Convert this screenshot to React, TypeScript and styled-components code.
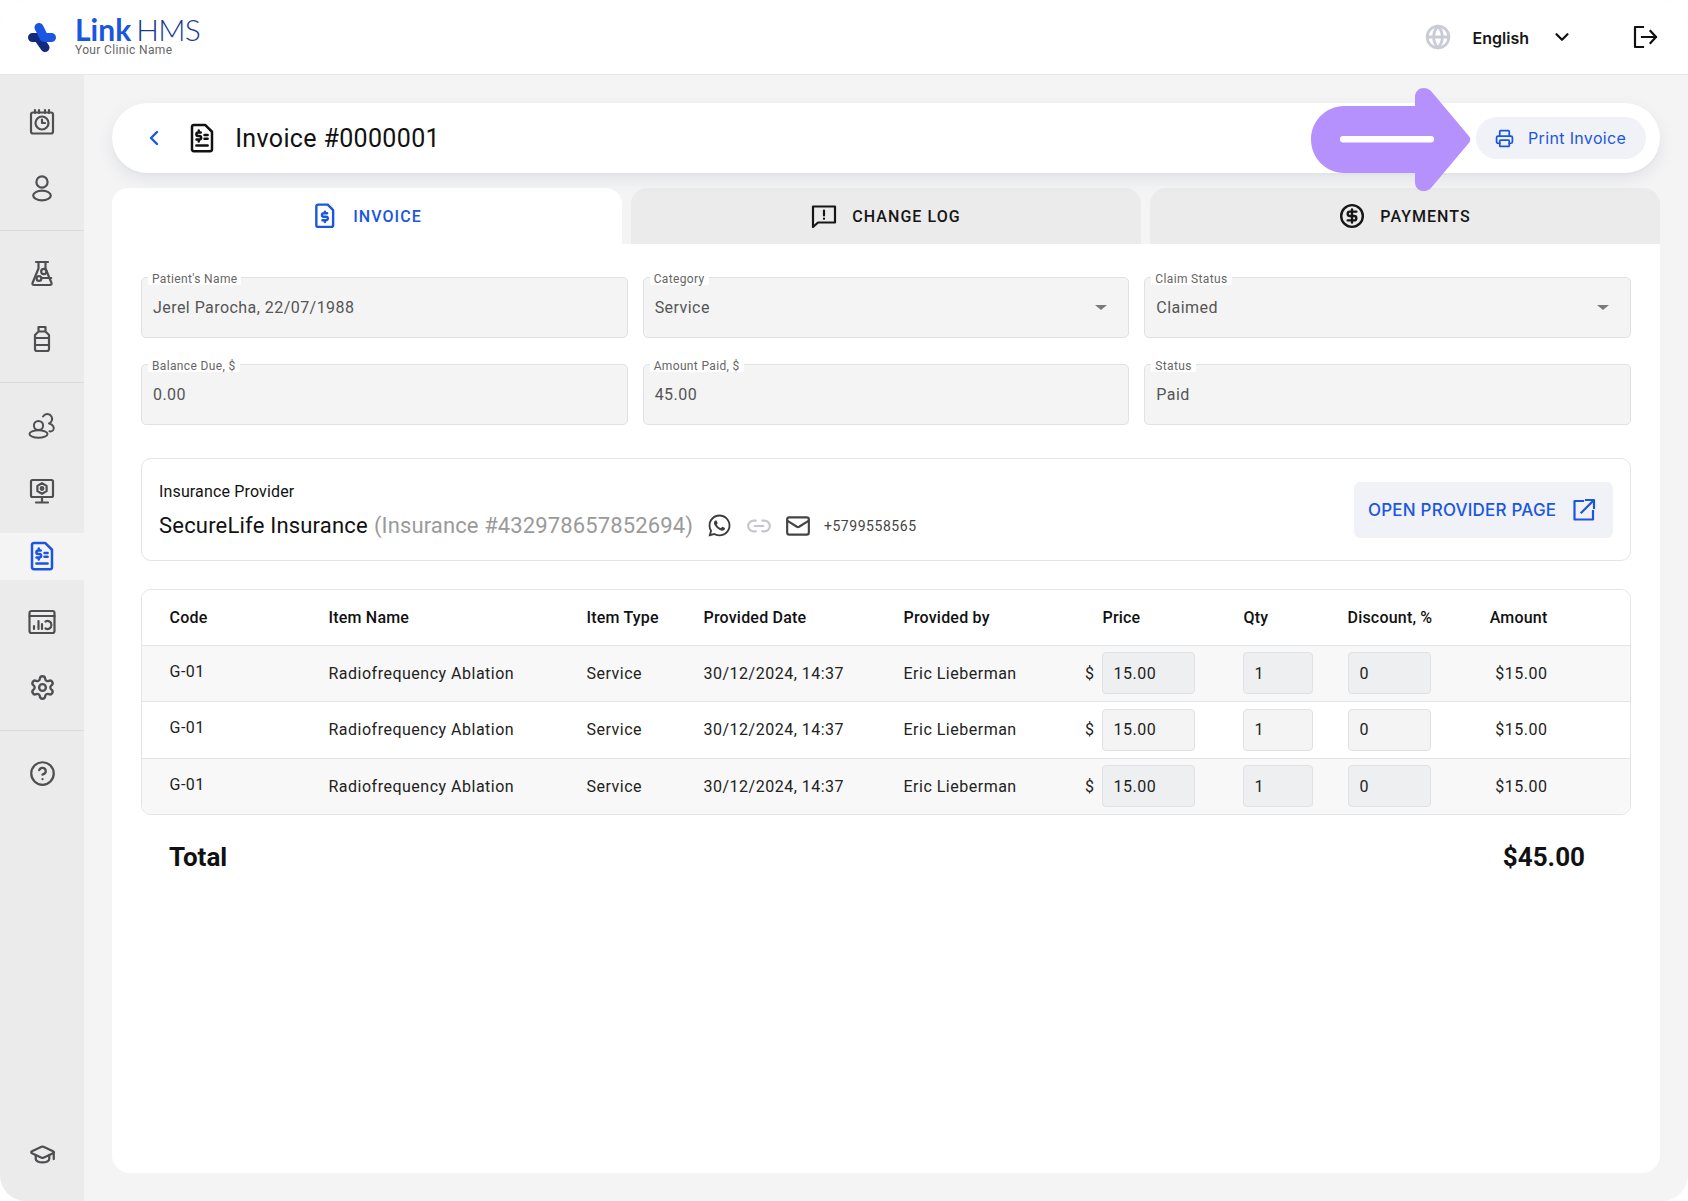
import React from "react";
import styled, { createGlobalStyle } from "styled-components";
import { ChevronDown, ChevronLeft, CircleDollarSign, CircleHelp, Globe, GraduationCap, Link2, Mail, Printer, Settings } from "lucide-react";
import { FaWhatsapp } from "react-icons/fa";

const BLUE = "#1a56e0";
const INK = "#4f4f52";

const GlobalStyle = createGlobalStyle`
  html, body { margin: 0; padding: 0; background: #fff; }
  * { box-sizing: border-box; }
  body { font-family: Roboto, "Liberation Sans", sans-serif; color: #111; }
`;

const Shell = styled.div`
  width: 1688px;
  height: 1201px;
  display: flex;
  flex-direction: column;
  border-radius: 26px;
  overflow: hidden;
  background: #f4f4f5;
`;

const TopBar = styled.header`
  height: 75px;
  flex: none;
  display: flex;
  align-items: center;
  padding: 0 28px;
  background: #fff;
  border-bottom: 1px solid #e6e7e9;
`;

const Brand = styled.div`
  display: flex;
  align-items: center;
  gap: 19px;
`;

const BrandText = styled.div`
  display: flex;
  flex-direction: column;
  margin-top: -3px;
`;

const BrandName = styled.div`
  font-family: Lato, sans-serif;
  font-size: 30px;
  line-height: 28px;
  font-weight: 700;
  color: ${BLUE};
  span { font-weight: 300; color: #17398f; margin-left: 5px; letter-spacing: -0.6px; }
`;

const ClinicName = styled.div`
  font-size: 12px;
  line-height: 12px;
  color: #666;
  letter-spacing: 0.35px;
  margin-top: 1px;
`;

const TopActions = styled.div`
  margin-left: auto;
  display: flex;
  align-items: center;
  padding-right: 2px;
`;

const Language = styled.span`
  font-family: Inter, sans-serif;
  font-weight: 600;
  font-size: 16px;
  color: #161616;
  margin: 1px 22px 0 22px;
`;

const LogoutSlot = styled.span`
  display: flex;
  margin-left: 59px;
`;

const Body = styled.div`
  flex: 1;
  display: flex;
  min-height: 0;
`;

const SideNav = styled.nav`
  width: 84px;
  flex: none;
  display: flex;
  flex-direction: column;
  background: #ebebeb;
`;

const NavGroup = styled.div<{ $first?: boolean; $plain?: boolean }>`
  display: flex;
  flex-direction: column;
  gap: 18.5px;
  padding: ${(p) => (p.$first ? "23.5px" : "19px")} 0 19px;
  border-bottom: ${(p) => (p.$plain ? "none" : "1px solid #d9dbe0")};
`;

const NavFooter = styled.div`
  margin-top: auto;
  padding-bottom: 23px;
`;

const NavItem = styled.div<{ $active?: boolean }>`
  height: 47px;
  display: flex;
  align-items: center;
  justify-content: center;
  color: ${(p) => (p.$active ? BLUE : INK)};
  background: ${(p) => (p.$active ? "#f4f4f5" : "transparent")};
`;

const Main = styled.main`
  flex: 1;
  min-width: 0;
  display: flex;
  flex-direction: column;
  gap: 15px;
  padding: 28px 28px 28px;
`;

const TitleBar = styled.div`
  position: relative;
  z-index: 2;
  height: 70px;
  flex: none;
  display: flex;
  align-items: center;
  padding: 0 14px 0 30px;
  border-radius: 35px;
  background: #fff;
  box-shadow: 0 2px 0 #e2e4e8, 0 6px 16px rgba(70, 80, 100, 0.1);
`;

const BackSlot = styled.span`
  display: flex;
  color: ${BLUE};
  margin-right: 20.5px;
`;

const Title = styled.h1`
  margin: 0 0 0 18.7px;
  font-size: 25px;
  font-weight: 400;
  letter-spacing: 0.35px;
  color: #111;
`;

const PrintButton = styled.button`
  margin-left: auto;
  height: 42px;
  width: 170px;
  display: flex;
  align-items: center;
  gap: 14px;
  padding: 0 0 0 19px;
  border: none;
  border-radius: 21px;
  background: #f0f2f7;
  color: ${BLUE};
  font-family: Inter, sans-serif;
  font-size: 16px;
  font-weight: 400;
  letter-spacing: 0.35px;
`;

const Annotation = styled.svg`
  position: absolute;
  left: 1199px;
  top: -16px;
  overflow: visible;
`;

const Card = styled.section`
  flex: 1;
  min-height: 0;
  display: flex;
  flex-direction: column;
`;

const Tabs = styled.div`
  display: grid;
  grid-template-columns: repeat(3, 1fr);
  gap: 9px;
  height: 56px;
  flex: none;
`;

const Tab = styled.div<{ $active?: boolean }>`
  display: flex;
  align-items: center;
  justify-content: center;
  gap: 15px;
  border-radius: 16px 16px 0 0;
  background: ${(p) => (p.$active ? "#fff" : "#ebebeb")};
  color: ${(p) => (p.$active ? BLUE : "#161616")};
  font-size: 16px;
  font-weight: 500;
  letter-spacing: 1.05px;
`;

const Panel = styled.div`
  flex: 1;
  padding: 33px 29px 0;
  background: #fff;
  border-radius: 0 0 18px 18px;
`;

const FieldGrid = styled.div`
  display: grid;
  grid-template-columns: repeat(3, 1fr);
  gap: 25.5px 15px;
`;

const Field = styled.div`
  position: relative;
  height: 61px;
  display: flex;
  align-items: center;
  padding-left: 11px;
  background: #f4f4f4;
  border: 1.5px solid #e0e1e3;
  border-radius: 5px;
  font-size: 16px;
  letter-spacing: 0.45px;
  color: #555;
`;

const FieldLabel = styled.span`
  position: absolute;
  left: 6px;
  top: -5px;
  height: 12px;
  padding: 0 4px;
  background: #fff;
  font-size: 12px;
  line-height: 12px;
  letter-spacing: 0.35px;
  color: #666;
`;

const Caret = styled.span`
  position: absolute;
  right: 21px;
  top: 27px;
  border-left: 6px solid transparent;
  border-right: 6px solid transparent;
  border-top: 5.5px solid #7a7a7a;
`;

const ProviderBox = styled.div`
  margin-top: 33.5px;
  height: 103px;
  display: flex;
  align-items: center;
  justify-content: space-between;
  padding: 0 17px 0 17px;
  border: 1.5px solid #e3e4e8;
  border-radius: 10px;
`;

const ProviderLabel = styled.div`
  font-size: 16px;
  line-height: 20px;
  letter-spacing: 0.15px;
  color: #111;
`;

const ProviderLine = styled.div`
  display: flex;
  align-items: center;
  margin-top: 12px;
  height: 24px;
`;

const ProviderName = styled.span`
  font-size: 22px;
  letter-spacing: 0.2px;
  color: #111;
`;

const ProviderNumber = styled.span`
  font-size: 22px;
  letter-spacing: 0.12px;
  margin-left: 6px;
  color: #9a9a9a;
`;

const ContactIcon = styled.span<{ $color: string; $gap: number }>`
  display: flex;
  color: ${(p) => p.$color};
  margin-left: ${(p) => p.$gap}px;
`;

const Phone = styled.span`
  margin-left: 13px;
  font-size: 14px;
  letter-spacing: 0.55px;
  color: #444;
`;

const ProviderButton = styled.button`
  width: 259px;
  height: 56px;
  display: flex;
  align-items: center;
  gap: 16px;
  padding: 0 0 0 14px;
  border: none;
  border-radius: 6px;
  background: #f0f2f7;
  color: ${BLUE};
  font-family: Inter, sans-serif;
  font-size: 17px;
  font-weight: 500;
  letter-spacing: 0.2px;
  white-space: nowrap;
`;

const Table = styled.div`
  margin-top: 28px;
  border: 1.5px solid #e3e4e8;
  border-radius: 10px;
  overflow: hidden;
`;

const Row = styled.div<{ $shade?: boolean; $head?: boolean }>`
  display: grid;
  grid-template-columns: 159px 258px 117px 200px 168px 171px 105px 83px 117px;
  align-items: center;
  height: ${(p) => (p.$head ? "54.5px" : "56.5px")};
  padding-left: 27.5px;
  background: ${(p) => (p.$shade ? "#f8f8f8" : "#fff")};
  border-top: ${(p) => (p.$head ? "none" : "1.5px solid #e3e4e8")};
  font-size: 16px;
  letter-spacing: 0.5px;
  color: #222;
`;

const HeadCell = styled.div<{ $indent?: number; $right?: boolean }>`
  font-weight: 500;
  color: #111;
  letter-spacing: 0.2px;
  white-space: nowrap;
  padding-left: ${(p) => p.$indent ?? 0}px;
  text-align: ${(p) => (p.$right ? "right" : "left")};
`;

const CodeCell = styled.div`
  margin-top: -4px;
`;

const PriceCell = styled.div`
  display: flex;
  align-items: center;
`;

const Currency = styled.span`
  width: 30px;
  padding-right: 7px;
  text-align: right;
`;

const ValueBox = styled.div<{ $width: number; $shade?: boolean }>`
  width: ${(p) => p.$width}px;
  height: 42px;
  display: flex;
  align-items: center;
  padding-left: 11px;
  background: ${(p) => (p.$shade ? "#eeeff0" : "#f4f4f5")};
  border: 1.5px solid #e0e1e3;
  border-radius: 4px;
`;

const AmountCell = styled.div`
  text-align: right;
`;

const TotalRow = styled.div`
  display: flex;
  justify-content: space-between;
  margin: 27px 46px 0 28px;
  font-size: 26px;
  line-height: 30px;
  font-weight: 700;
  color: #111;
`;

/* drawn icons, everything else comes from lucide */
const stroke = { fill: "none", stroke: "currentColor", strokeLinecap: "round", strokeLinejoin: "round" } as const;

const LogoMark = () => (
  <svg width="28" height="29" viewBox="0 0 28 29">
    <defs>
      <pattern id="logoDots" width="1.8" height="1.8" patternUnits="userSpaceOnUse">
        <rect width="1.8" height="1.8" fill="#1a3fae" />
        <circle cx="0.9" cy="0.9" r="0.75" fill="#050f3a" />
      </pattern>
    </defs>
    <path d="M4.5 14.5H10L17 24.5" fill="none" stroke="url(#logoDots)" strokeWidth="9" strokeLinejoin="round" strokeLinecap="round" />
    <path d="M11 4.500L16 14.500H23.500" fill="none" stroke="#1a56e0" strokeWidth="9" strokeLinejoin="round" strokeLinecap="round" />
  </svg>
);

const BillIcon = ({ size = 26 }: { size?: number }) => (
  <svg width={size} height={size} viewBox="0 0 24 24" {...stroke} strokeWidth="2">
    <path d="M5.5 1.5h9l5.5 5.5v14a1.5 1.5 0 0 1-1.5 1.5h-13A1.5 1.5 0 0 1 4 21V3a1.5 1.5 0 0 1 1.5-1.5z" />
    <path d="M11 7.6H8.9a1.4 1.4 0 0 0 0 2.8h1a1.4 1.4 0 0 1 0 2.8H7.6M9.4 6v1.6M9.4 13.2v1.6" />
    <path d="M14 9.5h2.5M14 12.5h2.5M7.5 18h9" />
  </svg>
);

const TabDocIcon = () => (
  <svg width="26" height="26" viewBox="0 0 24 24" {...stroke} strokeWidth="2.2">
    <path d="M5.5 1.5h9l5 5v14a1.5 1.5 0 0 1-1.5 1.5H5.5A1.5 1.5 0 0 1 4 20.5V3a1.5 1.500 0 0 1 1.5-1.5z" />
    <path d="M14 9.5h-3.2a1.6 1.6 0 0 0 0 3.2h2.2a1.6 1.6 0 0 1 0 3.2H9.6M11.9 8v1.5M11.9 16v1.5" />
  </svg>
);

const PlannerIcon = () => (
  <svg width="28" height="28" viewBox="0 0 28 28" {...stroke} strokeWidth="2.2">
    <rect x="3" y="4.5" width="22" height="21" rx="2" />
    <path d="M7 2v3M11 2v3M17 2v3M21 2v3" />
    <circle cx="14" cy="15" r="6.5" />
    <path d="M14 11.5V15h3" />
  </svg>
);

const PersonIcon = () => (
  <svg width="26" height="28" viewBox="0 0 26 28" {...stroke} strokeWidth="2.2">
    <circle cx="13" cy="8" r="5.6" />
    <ellipse cx="13" cy="21.5" rx="8.8" ry="4.8" />
  </svg>
);

const FlaskIcon = () => (
  <svg width="26" height="28" viewBox="0 0 26 28" {...stroke} strokeWidth="2.2">
    <path d="M7 2h12M9.5 2v6.5L3.5 23a1.5 1.5 0 0 0 1.4 2h16.200a1.500 1.500 0 0 0 1.400-2L16.500 8.500V2" />
    <circle cx="14.800" cy="11.500" r="2.600" />
    <circle cx="10" cy="18.500" r="2.400" />
    <path d="M12.200 18h10" />
  </svg>
);

const BottleIcon = () => (
  <svg width="22" height="28" viewBox="0 0 22 28" {...stroke} strokeWidth="2.2">
    <path d="M7.500 2h7v4.500h-7zM7.500 6.500L4 10v14a2 2 0 0 0 2 2h10a2 2 0 0 0 2-2V10l-3.500-3.500" />
    <path d="M4 13h14M4 20h14" />
  </svg>
);

const PeopleIcon = () => (
  <svg width="28" height="27" viewBox="0 0 28 27" {...stroke} strokeWidth="2">
    <circle cx="10.500" cy="13.500" r="4.600" />
    <ellipse cx="10.500" cy="22" rx="9" ry="3.800" />
    <path d="M15 4.500C17 1.500 21.500 1 23.500 4.500C25 7.500 23.500 10.500 21 11.500C25 12 26.800 16 25.300 18C24.300 19.300 22.800 19.600 21.500 19.300" />
  </svg>
);

const MonitorIcon = () => (
  <svg width="28" height="28" viewBox="0 0 28 28" {...stroke} strokeWidth="2.200">
    <rect x="3" y="3" width="22" height="17" rx="1.500" />
    <path d="M14 20v5M8 25.500h12" />
    <path d="M14 6.200l4.600 2.650v5.300L14 16.800l-4.600-2.650v-5.300z" />
    <circle cx="14" cy="11.500" r="1.300" />
  </svg>
);

const ReportIcon = () => (
  <svg width="28" height="26" viewBox="0 0 28 26" {...stroke} strokeWidth="2.200">
    <rect x="1.500" y="2" width="25" height="22" rx="2" />
    <path d="M1.500 7h25" />
    <path d="M6 20v-3M10.500 20v-8M14 20v-5" />
    <path d="M17.500 12.500a4 4 0 1 1 0 7" />
  </svg>
);

const LogoutIcon = () => (
  <svg width="26" height="26" viewBox="0 0 26 26" {...stroke} strokeWidth="2.200" strokeLinecap="square">
    <path d="M11 3H3v20h8" />
    <path d="M10 13h14M18.500 7l5.500 6-5.500 6" />
  </svg>
);

const CommentIcon = () => (
  <svg width="26" height="26" viewBox="0 0 26 26" {...stroke} strokeWidth="2.200">
    <path d="M2 3.500h22v16H7l-5 4.500z" strokeLinejoin="round" />
    <path d="M13 7.500v5M13 15.500v.3" />
  </svg>
);

const OutlinkIcon = () => (
  <svg width="24" height="24" viewBox="0 0 24 24" {...stroke} strokeWidth="2.200" strokeLinecap="square">
    <path d="M11 3H2.500v18.500H21V13" />
    <path d="M9.500 14.500L21.500 2.500M14 2h8v8" />
  </svg>
);

const rows = [true, false, true];

export default function App() {
  return (
    <>
      <GlobalStyle />
      <Shell>
        <TopBar>
          <Brand>
            <LogoMark />
            <BrandText>
              <BrandName>
                Link<span>HMS</span>
              </BrandName>
              <ClinicName>Your Clinic Name</ClinicName>
            </BrandText>
          </Brand>
          <TopActions>
            <Globe size={26} color="#c9cbd6" strokeWidth={2.6} />
            <Language>English</Language>
            <ChevronDown size={22} color="#111" strokeWidth={2.4} />
            <LogoutSlot>
              <LogoutIcon />
            </LogoutSlot>
          </TopActions>
        </TopBar>
        <Body>
          <SideNav>
            <NavGroup $first>
              <NavItem><PlannerIcon /></NavItem>
              <NavItem><PersonIcon /></NavItem>
            </NavGroup>
            <NavGroup>
              <NavItem><FlaskIcon /></NavItem>
              <NavItem><BottleIcon /></NavItem>
            </NavGroup>
            <NavGroup>
              <NavItem><PeopleIcon /></NavItem>
              <NavItem><MonitorIcon /></NavItem>
              <NavItem $active><BillIcon size={30} /></NavItem>
              <NavItem><ReportIcon /></NavItem>
              <NavItem><Settings size={27} strokeWidth={2.1} /></NavItem>
            </NavGroup>
            <NavGroup $plain>
              <NavItem><CircleHelp size={27} strokeWidth={2} /></NavItem>
            </NavGroup>
            <NavFooter>
              <NavItem><GraduationCap size={27} strokeWidth={2} /></NavItem>
            </NavFooter>
          </SideNav>
          <Main>
            <TitleBar>
              <BackSlot><ChevronLeft size={24} strokeWidth={2.4} /></BackSlot>
              <BillIcon size={30} />
              <Title>Invoice #0000001</Title>
              <PrintButton>
                <Printer size={19} strokeWidth={2.2} />
                Print Invoice
              </PrintButton>
              <Annotation width="160" height="105" viewBox="0 0 160 105">
                <path
                  d="M33 19H104V10C104 1 114 -2 120 4L157 48C160 51 160 54 157 57L120 101C114 107 104 104 104 95V86H33C15 86 0 71 0 52.500C0 34 15 19 33 19Z"
                  fill="#b491fd"
                />
                <rect x="29" y="49" width="94" height="6.500" rx="3" fill="#fff" />
              </Annotation>
            </TitleBar>
            <Card>
              <Tabs>
                <Tab $active><TabDocIcon />INVOICE</Tab>
                <Tab><CommentIcon />CHANGE LOG</Tab>
                <Tab><CircleDollarSign size={26} strokeWidth={2.2} />PAYMENTS</Tab>
              </Tabs>
              <Panel>
                <FieldGrid>
                  <Field><FieldLabel>Patient's Name</FieldLabel>Jerel Parocha, 22/07/1988</Field>
                  <Field><FieldLabel>Category</FieldLabel>Service<Caret /></Field>
                  <Field><FieldLabel>Claim Status</FieldLabel>Claimed<Caret /></Field>
                  <Field><FieldLabel>Balance Due, $</FieldLabel>0.00</Field>
                  <Field><FieldLabel>Amount Paid, $</FieldLabel>45.00</Field>
                  <Field><FieldLabel>Status</FieldLabel>Paid</Field>
                </FieldGrid>
                <ProviderBox>
                  <div>
                    <ProviderLabel>Insurance Provider</ProviderLabel>
                    <ProviderLine>
                      <ProviderName>SecureLife Insurance</ProviderName>
                      <ProviderNumber>(Insurance #432978657852694)</ProviderNumber>
                      <ContactIcon $color="#3c3c3c" $gap={14}><FaWhatsapp size={25} /></ContactIcon>
                      <ContactIcon $color="#c4c6cc" $gap={14}><Link2 size={26} strokeWidth={2} /></ContactIcon>
                      <ContactIcon $color="#444" $gap={13}><Mail size={26} strokeWidth={2} /></ContactIcon>
                      <Phone>+5799558565</Phone>
                    </ProviderLine>
                  </div>
                  <ProviderButton>
                    OPEN PROVIDER PAGE
                    <OutlinkIcon />
                  </ProviderButton>
                </ProviderBox>
                <Table>
                  <Row $head>
                    <HeadCell>Code</HeadCell>
                    <HeadCell>Item Name</HeadCell>
                    <HeadCell>Item Type</HeadCell>
                    <HeadCell>Provided Date</HeadCell>
                    <HeadCell>Provided by</HeadCell>
                    <HeadCell $indent={31}>Price</HeadCell>
                    <HeadCell $indent={1}>Qty</HeadCell>
                    <HeadCell>Discount, %</HeadCell>
                    <HeadCell $right>Amount</HeadCell>
                  </Row>
                  {rows.map((shade, i) => (
                    <Row key={i} $shade={shade}>
                      <CodeCell>G-01</CodeCell>
                      <div>Radiofrequency Ablation</div>
                      <div>Service</div>
                      <div>30/12/2024, 14:37</div>
                      <div>Eric Lieberman</div>
                      <PriceCell>
                        <Currency>$</Currency>
                        <ValueBox $width={93} $shade={shade}>15.00</ValueBox>
                      </PriceCell>
                      <ValueBox $width={70} $shade={shade}>1</ValueBox>
                      <ValueBox $width={83} $shade={shade}>0</ValueBox>
                      <AmountCell>$15.00</AmountCell>
                    </Row>
                  ))}
                </Table>
                <TotalRow>
                  <span>Total</span>
                  <span>$45.00</span>
                </TotalRow>
              </Panel>
            </Card>
          </Main>
        </Body>
      </Shell>
    </>
  );
}
